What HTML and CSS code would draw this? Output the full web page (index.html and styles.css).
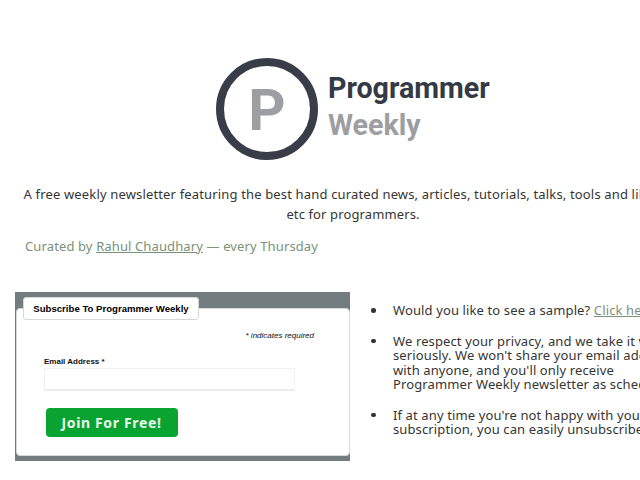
FILE: index.html
```
<!DOCTYPE html>
<html lang="en">
<head>
<meta charset="utf-8">
<title>Programmer Weekly</title>
<link rel="stylesheet" href="styles.css">
</head>
<body>
<header class="brand">
  <div class="mark">P</div>
  <h1 class="wordmark"><span class="name">Programmer</span><span class="period">Weekly</span></h1>
</header>
<p class="intro"><span class="lead">A free weekly newsletter featuring the best hand curated news, articles, tutorials, talks, tools and libraries</span><br>etc for programmers.</p>
<p class="byline">Curated by <a href="#">Rahul Chaudhary</a> — every Thursday</p>
<main class="columns">
  <form class="signup">
    <div class="panel">
      <h2 class="legend">Subscribe To Programmer Weekly</h2>
      <p class="required">* indicates required</p>
      <label class="label" for="email">Email Address *</label>
      <input class="field" id="email" type="email">
      <button class="join" type="button">Join For Free!</button>
    </div>
  </form>
  <ul class="notes">
    <li>Would you like to see a sample? <a href="#">Click here</a></li>
    <li>We respect your privacy, and we take it very<br>seriously. We won't share your email address<br>with anyone, and you'll only receive<br>Programmer Weekly newsletter as scheduled.</li>
    <li>If at any time you're not happy with your<br>subscription, you can easily unsubscribe.</li>
  </ul>
</main>
</body>
</html>
```
FILE: styles.css
```
* { box-sizing: border-box; }
html { overflow: hidden; }
body {
  margin: 0;
  width: 706px;
  height: 480px;
  overflow: hidden;
  background: #fff;
  color: #353535;
  font: 13px/20px "Lucida Sans", "Noto Sans", sans-serif;
  letter-spacing: 0.12px;
  white-space: nowrap;
}
h1, h2, p, ul { margin: 0; padding: 0; }
a { color: #7a917a; text-decoration: underline; }
.brand { display: flex; height: 184px; padding: 57px 0 0 216px; gap: 10px; letter-spacing: 0; }
.mark {
  width: 102px; height: 102px;
  margin-top: 0.5px;
  border: 8px solid #383d47;
  border-radius: 50%;
  color: #9d9ea2;
  font: bold 58px/89px Roboto, sans-serif;
  text-align: center;
}
.wordmark { display: flex; flex-direction: column; padding-top: 13px; font: bold 28.6px/37px Roboto, sans-serif; }
.name { color: #343a45; }
.period { color: #9d9ea2; }
.intro { text-align: center; }
.lead { letter-spacing: 0.155px; }
.byline { padding: 12px 0 0 25px; color: #7a917a; }
.columns { display: flex; padding: 36px 0 0 15px; }
.signup {
  width: 335px; height: 169px;
  padding: 16px 0 5px 1px;
  background: #737d7f;
}
.panel {
  height: 148px;
  padding-left: 28px;
  background: #fff;
  border: 1px solid #d5d8d8;
  border-radius: 4px;
  font-family: "Liberation Sans", sans-serif;
  color: #111;
  letter-spacing: 0;
}
.legend {
  width: 176px; height: 23px;
  margin: -12px 0 0 -22px;
  background: #fff;
  border: 1px solid #d5d8d8;
  border-radius: 3px;
  font: bold 9.6px/21px "Liberation Sans", sans-serif;
  color: #000;
  text-align: center;
}
.required { width: 269px; padding-top: 10px; font: italic 8px/12px "Liberation Sans", sans-serif; text-align: right; }
.label { display: block; margin: 15px 0 0 -1px; font: bold 8px/10px "Liberation Sans", sans-serif; }
.field {
  display: block;
  width: 251px; height: 23px;
  margin: 1px 0 0 -1px;
  background: #fff;
  border: 1px solid #f1f1f1;
  border-bottom: 2px solid #ececec;
}
.join {
  display: block;
  width: 132px; height: 29px;
  margin: 17px 0 0 0.5px;
  padding: 0;
  border: 0;
  border-radius: 4px;
  background: #08a330;
  color: #e8f8ec;
  font: bold 14px/29px "Noto Sans", sans-serif;
  letter-spacing: 0.65px;
}
.notes { margin-left: 43px; padding-top: 11.2px; list-style: none; line-height: 14.4px; }
.notes li { position: relative; margin-bottom: 16.3px; }
.notes li::before {
  content: "";
  position: absolute;
  left: -22px; top: 5px;
  width: 4.5px; height: 4.5px;
  border-radius: 50%;
  background: #303030;
}
```
